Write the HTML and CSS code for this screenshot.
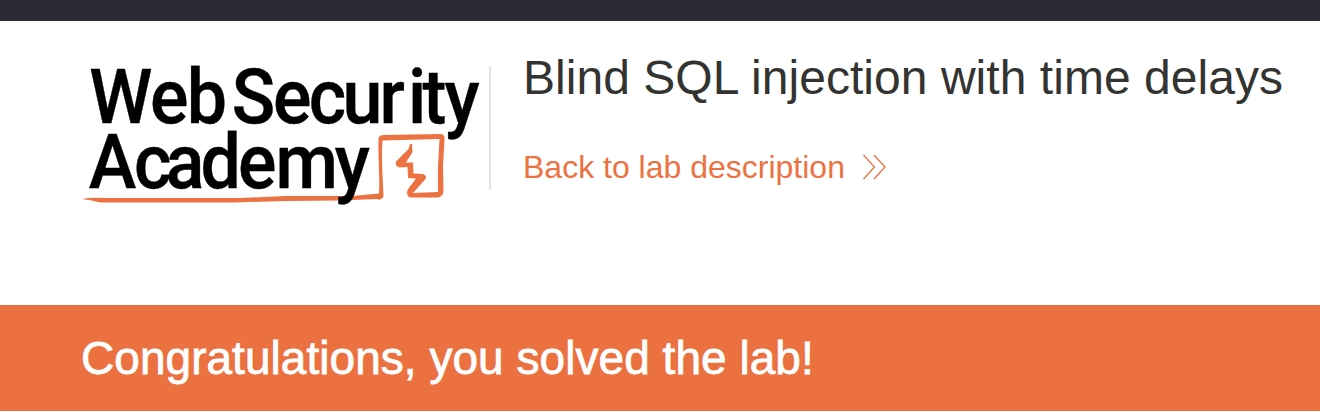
FILE: index.html
```html
<!DOCTYPE html>
<html lang="en">
<head>
<meta charset="utf-8">
<title>Blind SQL injection with time delays</title>
<link rel="stylesheet" href="styles.css">
</head>
<body>
<div class="topbar"></div>
<header class="header">
  <svg class="logo" viewBox="80 60 404 150" role="img" aria-label="Web Security Academy">
    <g class="logo-mark">
      <path d="M82 199 Q92 197 106 198 L240 198 L285 196 L352 196 L379 193.500 C380 178 378 158 378.500 140 Q378 135 384 135 L440 134 Q445 134 444.500 139 L443 166 L443.500 191 Q443 197 437 197.500 L411 197.500 Q406 197 407.500 190 L416 178.500 L408 178 L407.500 167 L399 167.500 Q394 165 396.500 161 L408.500 149 L410 144 L412 144 L412.500 152 L406 162.500 L413 162.500 L413.500 173.500 L423 174 Q428 176 425 179.500 L413 193 L438 192 L438 166 L439.500 139 L382.500 140.500 C381 158 383 180 383.500 197 Q380 201 377 199 L340 200.500 L285 201 L235 202.500 L100 202.500 Q92 200 82 199Z"/>
    </g>
    <g class="logo-text" transform="scale(.95 1)">
      <text y="123.500" x="94 158 196.500 228 244 287.500 325 360.500 399.500 429.500 444.800 468">Web Security</text>
      <text y="188" x="93.500 141 174.500 211 250.500 290 352.500">Academy</text>
    </g>
  </svg>
  <div class="divider"></div>
  <div class="title">
    <h1 class="heading">Blind SQL injection with time delays</h1>
    <a class="back">Back to lab description
      <svg class="chevrons" viewBox="0 0 25 26"><path d="M1.500 1 12.500 13 1.500 25M12 1 23 13 12 25"/></svg>
    </a>
  </div>
</header>
<section class="banner"><p class="message">Congratulations, you solved the lab!</p></section>
</body>
</html>
```
FILE: styles.css
```css
body {
  margin: 0;
  background: #fff;
  font-family: "Liberation Sans", Arial, sans-serif;
  overflow: hidden;
}
.topbar { height: 21px; background: #2c2a35; }
.header {
  display: flex;
  align-items: flex-start;
  height: 245px;
  padding: 39px 0 0 80px;
  box-sizing: content-box;
}
.logo { width: 404px; height: 150px; flex: none; overflow: visible; }
.logo-mark { fill: #ec7241; }
.logo-text { font-family: Roboto, sans-serif; font-weight: 500; font-size: 75.500px; fill: #000; stroke: #000; stroke-width: .4px; }
.divider { width: 2px; height: 124px; margin: 6px 0 0 5px; background: #e3e3e3; flex: none; }
.title { margin-left: 32px; white-space: nowrap; }
.heading {
  margin: -10px 0 0;
  font-size: 48px;
  letter-spacing: .04px;
  font-weight: 400;
  line-height: 56px;
  color: #333332;
}
.back {
  display: flex;
  align-items: center;
  gap: 17px;
  margin-top: 42px;
  font-size: 32px;
  line-height: 38px;
  color: #ec7241;
}
.chevrons { width: 25px; height: 26px; fill: none; stroke: #ec7241; stroke-width: 1.300; }
.banner { height: 106px; background: #eb7140; }
.message {
  margin: 0;
  padding: 26px 0 0 81px;
  font-size: 46px;
  letter-spacing: .04px;
  line-height: 54px;
  color: #fff;
  -webkit-text-stroke: .8px #fff;
}
```
